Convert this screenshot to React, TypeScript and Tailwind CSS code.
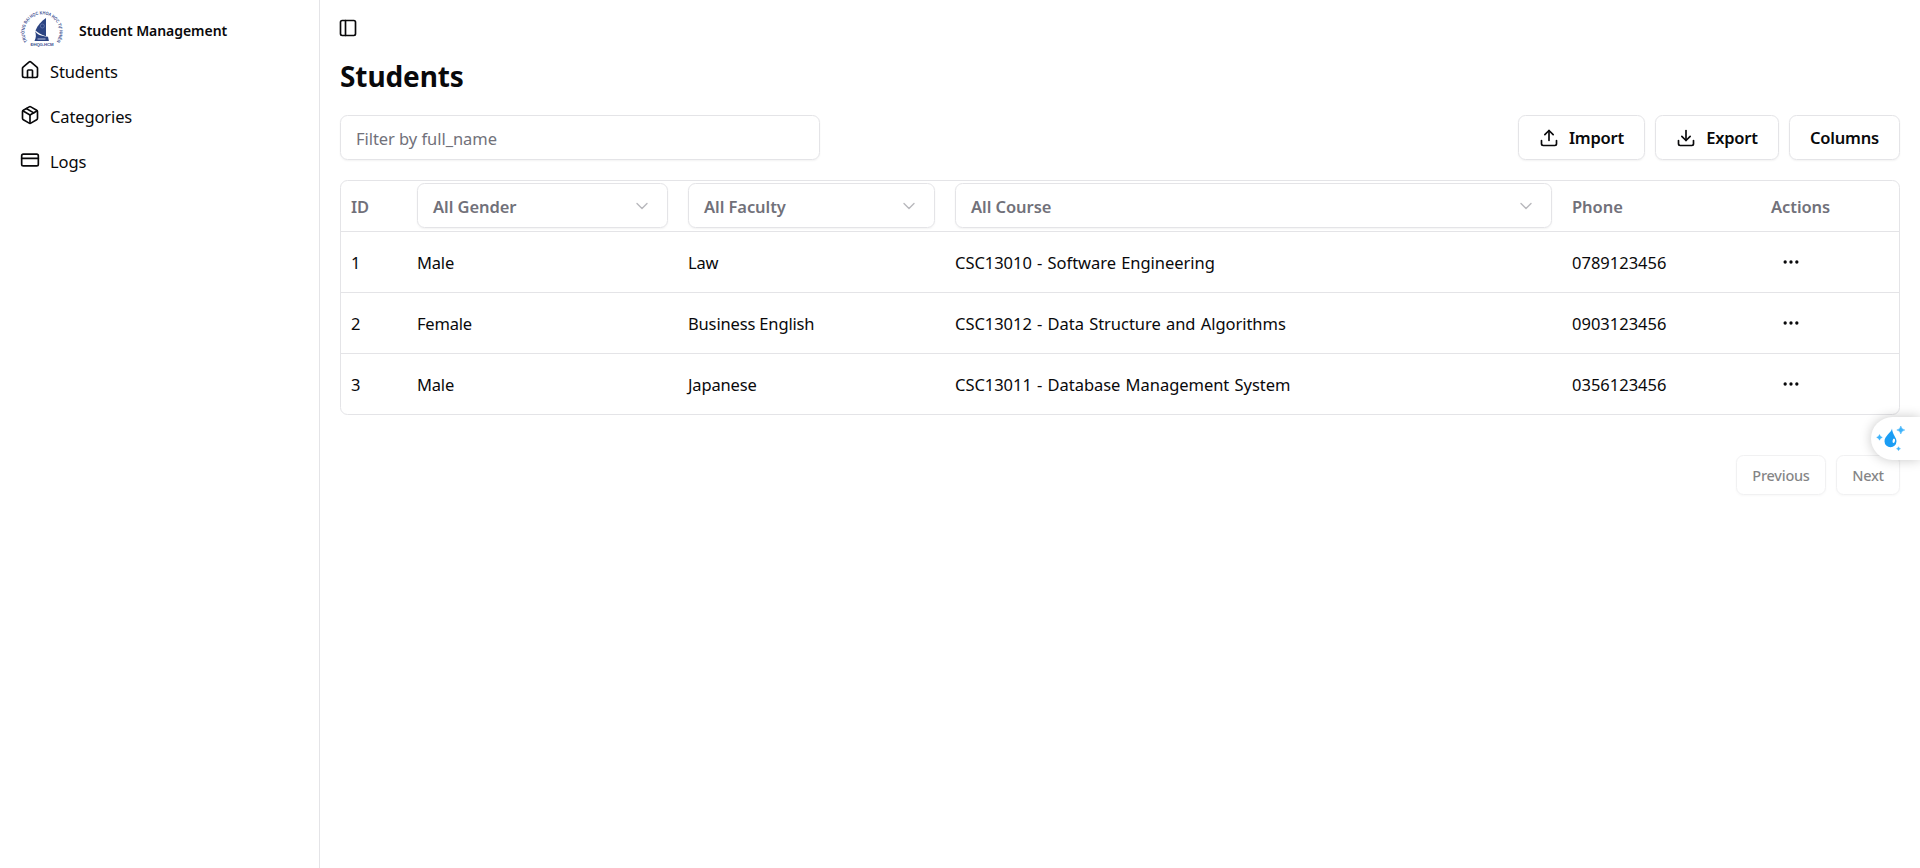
import React from "react";
import {
  ChevronDown,
  CreditCard,
  Download,
  Ellipsis,
  House,
  Package,
  PanelLeft,
  Upload,
} from "lucide-react";

const navItems = [
  { label: "Students", icon: House },
  { label: "Categories", icon: Package },
  { label: "Logs", icon: CreditCard },
];

const students = [
  { id: 1, gender: "Male", faculty: "Law", course: "CSC13010 - Software Engineering", phone: "0789123456" },
  { id: 2, gender: "Female", faculty: "Business English", course: "CSC13012 - Data Structure and Algorithms", phone: "0903123456" },
  { id: 3, gender: "Male", faculty: "Japanese", course: "CSC13011 - Database Management System", phone: "0356123456" },
];

const rowGrid = "grid grid-cols-[66px_271px_267px_617px_199px_1fr] items-center *:px-2.5";

function SchoolLogo() {
  return (
    <svg viewBox="0 0 44 38" className="mb-[3px] h-[38px] w-11 overflow-visible" fill="none">
      <defs>
        <path id="ring" d="M7.400 32.500A17.500 17.500 0 1 1 36.600 32.500" />
      </defs>
      <text fontSize="4.600" fontWeight="700" fill="#3d5090" className="font-['Liberation_Sans']">
        <textPath href="#ring" textLength="75" lengthAdjust="spacingAndGlyphs">TRƯỜNG ĐẠI HỌC KHOA HỌC TỰ NHIÊN</textPath>
      </text>
      <path d="M26 9c-4.500 3-8.500 7.500-10.500 12.500 2 2.200 5.500 4.200 10.500 5.800V9Z" fill="#2c4482" />
      <path d="M15 22.300c2 3 6 5 13 5.500l.9 4.200H14.500c1.700-3 1.800-6.500.5-9.700Z" fill="#2c4482" />
      <circle cx="22.400" cy="17" r="2" stroke="#6f80b3" strokeWidth=".7" />
      <path d="M17.500 30h8" stroke="#a5b0d2" strokeWidth="1.200" />
      <text x="22" y="37" textAnchor="middle" fontSize="4.300" fontWeight="700" fill="#3d5090" textLength="23" className="font-['Liberation_Sans']">
        ĐHQG-HCM
      </text>
    </svg>
  );
}

function Sidebar() {
  return (
    <aside className="flex w-80 shrink-0 flex-col border-r border-[#e4e4e7] pt-[9px]">
      <div className="flex h-10 items-center gap-[15px] pl-5">
        <SchoolLogo />
        <span className="pt-[3px] text-[14px] leading-5 font-semibold tracking-[-0.05px]">Student Management</span>
      </div>
      <nav className="flex flex-col">
        {navItems.map(({ label, icon: Icon }) => (
          <a key={label} className="flex h-[45px] items-center gap-2.5 pl-5">
            <Icon size={20} className="mb-1" />
            <span className="text-[16.5px] leading-6 tracking-[-0.12px]">{label}</span>
          </a>
        ))}
      </nav>
    </aside>
  );
}

function OutlineButton({ className, children }: { className: string; children: React.ReactNode }) {
  return (
    <button
      className={`flex h-[45px] items-center justify-center gap-2.5 rounded-[7.500px] border border-[#e4e4e7] text-[16.5px] font-semibold tracking-[-0.2px] shadow-xs ${className}`}
    >
      {children}
    </button>
  );
}

function FilterSelect({ label }: { label: string }) {
  return (
    <div className="pb-0.5">
      <button className="flex h-[45px] w-full items-center justify-between rounded-[7.500px] border border-[#e4e4e7] px-[15px] shadow-xs">
        <span className="pt-[3px]">{label}</span>
        <ChevronDown size={20} strokeWidth={1.6} className="mt-0.5 opacity-50" />
      </button>
    </div>
  );
}

function StudentTable() {
  return (
    <div className="rounded-[7.500px] border border-[#e4e4e7] text-[16.5px] leading-6">
      <div className={`${rowGrid} h-[51px] border-b border-[#e4e4e7] font-semibold tracking-[-0.06px] text-[#71717a]`}>
        <div className="pt-0.5">ID</div>
        <FilterSelect label="All Gender" />
        <FilterSelect label="All Faculty" />
        <FilterSelect label="All Course" />
        <div className="pt-0.5">Phone</div>
        <div className="pt-0.5">Actions</div>
      </div>
      {students.map((s) => (
        <div key={s.id} className={`${rowGrid} h-[61px] border-b border-[#e4e4e7] last:h-[60px] last:border-b-0`}>
          <div className="pt-0.5">{s.id}</div>
          <div className="pt-0.5 tracking-[-0.2px]">{s.gender}</div>
          <div className="pt-0.5 tracking-[-0.15px]">{s.faculty}</div>
          <div className="pt-0.5 tracking-[-0.04px] [word-spacing:1px]">{s.course}</div>
          <div className="pt-0.5">{s.phone}</div>
          <div>
            <button className="grid size-10 place-items-center">
              <Ellipsis size={20} />
            </button>
          </div>
        </div>
      ))}
    </div>
  );
}

function AssistantTab() {
  return (
    <button className="absolute top-[417px] right-0 flex h-[43px] w-[49px] items-center rounded-l-full bg-white pb-px pl-[5px] shadow-[0_0_12px_rgba(0,0,0,0.22)]">
      <svg width="30" height="28" viewBox="0 0 30 28">
        <path d="M16 4.500c-.5 4-7.500 7.300-7.500 12.800a6 5.900 0 0 0 12 0c0-4-4-6.500-4.500-12.800Z" fill="#1a9df4" />
        <ellipse cx="17.800" cy="16.800" rx="1.200" ry="2.200" fill="#fff" transform="rotate(12 17.800 16.800)" />
        <path d="M24.800 2q.6 3.400 4 4-3.400.6-4 4-.6-3.400-4-4 3.400-.6 4-4Z" fill="#3db3fb" stroke="#3db3fb" strokeWidth=".5" />
        <path d="M3.500 10.600q.5 2.300 2.800 2.800-2.300.5-2.800 2.800-.5-2.300-2.800-2.800 2.300-.5 2.800-2.800Z" fill="#3db3fb" stroke="#3db3fb" strokeWidth=".5" />
        <path d="M22.500 22.700q.3 1.700 2 2-1.700.3-2 2-.3-1.700-2-2 1.700-.3 2-2Z" fill="#3db3fb" stroke="#3db3fb" strokeWidth=".4" />
      </svg>
    </button>
  );
}

export default function App() {
  return (
    <div className="relative flex h-screen overflow-hidden bg-white font-['Noto_Sans',sans-serif] text-[#09090b]">
      <Sidebar />
      <main className="flex min-w-0 flex-1 flex-col px-5 pt-[18px]">
        <button className="-ml-0.5 w-5">
          <PanelLeft size={20} />
        </button>
        <h1 className="mt-[18px] text-[28px] leading-10 font-bold tracking-[-0.1px]">Students</h1>
        <div className="mt-[19px] flex items-center justify-between">
          <input
            placeholder="Filter by full_name"
            className="h-[45px] w-[480px] rounded-[7.500px] border border-[#e4e4e7] px-[15px] pt-px text-[16.5px] tracking-[-0.05px] shadow-xs placeholder:text-[#71717a]"
          />
          <div className="flex gap-2.5">
            <OutlineButton className="w-[127px]">
              <Upload size={20} />
              <span className="pt-0.5">Import</span>
            </OutlineButton>
            <OutlineButton className="w-[124px]">
              <Download size={20} />
              <span className="pt-0.5">Export</span>
            </OutlineButton>
            <OutlineButton className="w-[111px]">
              <span className="pt-0.5">Columns</span>
            </OutlineButton>
          </div>
        </div>
        <div className="mt-5">
          <StudentTable />
        </div>
        <div className="mt-10 flex justify-end gap-2.5 text-[14.5px] font-medium tracking-[-0.25px]">
          <button className="h-10 w-[90px] rounded-[7.500px] border border-[#e4e4e7] pt-0.5 opacity-50 shadow-xs">Previous</button>
          <button className="h-10 w-16 rounded-[7.500px] border border-[#e4e4e7] pt-0.5 opacity-50 shadow-xs">Next</button>
        </div>
      </main>
      <AssistantTab />
    </div>
  );
}
